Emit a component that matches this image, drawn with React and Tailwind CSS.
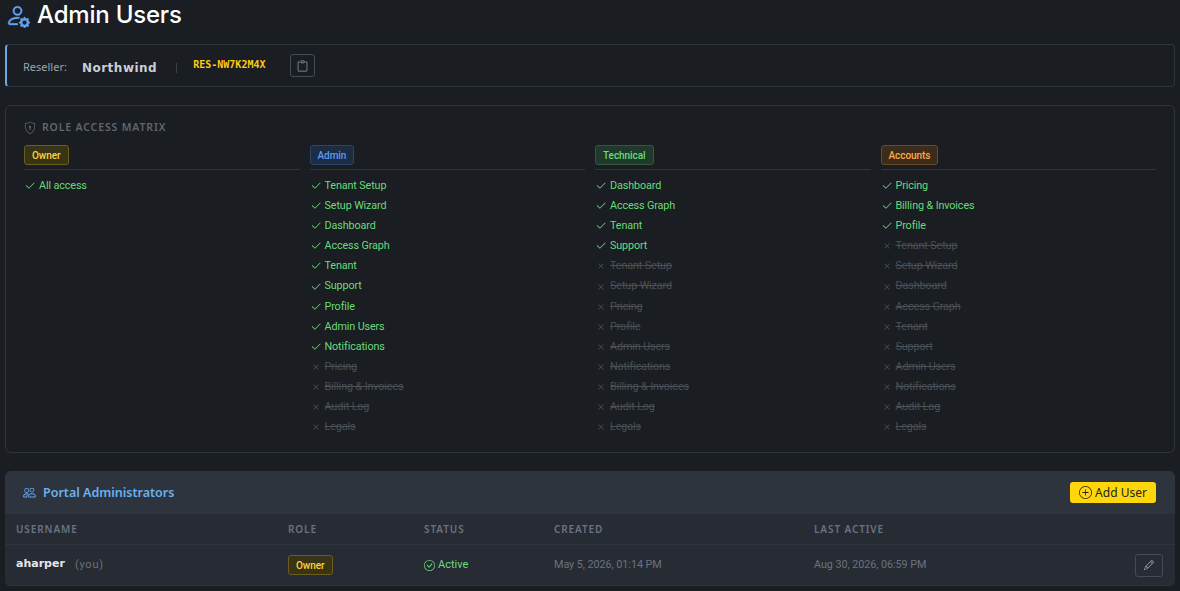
import React from 'react';
import { BsPersonGear, BsClipboard, BsShieldLock, BsPeople, BsPlusCircle, BsCheckCircle, BsPencil, BsCheck2, BsX } from 'react-icons/bs';

const roleStyles = {
  Owner: 'bg-[#3a3416] border-[#6b5d1c] text-[#ffd43b]',
  Admin: 'bg-[#1c2c44] border-[#2c4468] text-[#5a9cf5]',
  Technical: 'bg-[#1f3a2a] border-[#2f5a3e] text-[#69db7c]',
  Accounts: 'bg-[#3d2c1a] border-[#6b4a24] text-[#ffa94d]',
};

const matrix = [
  { role: 'Owner', on: ['All access'], off: [] },
  {
    role: 'Admin',
    on: ['Tenant Setup', 'Setup Wizard', 'Dashboard', 'Access Graph', 'Tenant', 'Support', 'Profile', 'Admin Users', 'Notifications'],
    off: ['Pricing', 'Billing & Invoices', 'Audit Log', 'Legals'],
  },
  {
    role: 'Technical',
    on: ['Dashboard', 'Access Graph', 'Tenant', 'Support'],
    off: ['Tenant Setup', 'Setup Wizard', 'Pricing', 'Profile', 'Admin Users', 'Notifications', 'Billing & Invoices', 'Audit Log', 'Legals'],
  },
  {
    role: 'Accounts',
    on: ['Pricing', 'Billing & Invoices', 'Profile'],
    off: ['Tenant Setup', 'Setup Wizard', 'Dashboard', 'Access Graph', 'Tenant', 'Support', 'Admin Users', 'Notifications', 'Audit Log', 'Legals'],
  },
];

const RoleBadge = ({ role }) => (
  <span className={`inline-flex items-center h-[20px] px-[7px] rounded-[3px] border font-['Roboto',sans-serif] text-[10px] tracking-[-0.05px] font-medium ${roleStyles[role]}`}>
    {role}
  </span>
);

const MatrixColumn = ({ role, on, off }) => (
  <div>
    <div className="flex items-start h-[25px] border-b border-[#30353d]">
      <RoleBadge role={role} />
    </div>
    <ul className="mt-[6px] font-['Roboto',sans-serif]">
      {on.map((item) => (
        <li key={item} className="flex items-center h-[20.1px] text-[10.8px] tracking-[-0.12px] text-[#69db7c]">
          <BsCheck2 className="w-[12px] h-[12px] mr-[3px] shrink-0" />
          <span>{item}</span>
        </li>
      ))}
      {off.map((item) => (
        <li key={item} className="flex items-center h-[20.1px] text-[10.8px] tracking-[-0.12px] text-[#495057]">
          <BsX className="w-[12px] h-[12px] mr-[3px] shrink-0" />
          <span className="line-through">{item}</span>
        </li>
      ))}
    </ul>
  </div>
);

const Th = ({ className = '', children }) => (
  <div className={`text-[10px] font-semibold tracking-[0.9px] text-[#6b7280] ${className}`}>{children}</div>
);

export default function App() {
  return (
    <div className="h-[591px] overflow-hidden bg-[#1a1d21] px-[5px] font-['Noto_Sans',sans-serif]">
      <header className="flex items-center h-[30px] gap-[7px]">
        <BsPersonGear className="w-[25px] h-[25px] text-[#60a5fa]" stroke="currentColor" strokeWidth="0.25" />
        <h1 className="font-['Inter',sans-serif] text-[24px] font-medium tracking-[-0.2px] text-white leading-none">Admin Users</h1>
      </header>

      <section className="mt-[14px] h-[43px] flex items-center border border-[#30353d] border-l-2 border-l-[#6ea8e8] rounded-[4px] pl-[16px]">
        <span className="mt-[4px] text-[11px] text-[#9ca3af]">Reseller:</span>
        <span className="mt-[4px] ml-[15px] font-['DejaVu_Sans',sans-serif] text-[12px] font-bold tracking-[0.5px] text-[#c9ced6]">Northwind</span>
        <span className="mt-[4px] ml-[19px] h-[10px] w-px bg-[#3a4049]" />
        <span className="ml-[16px] font-['DejaVu_Sans_Mono',monospace] text-[10px] font-bold text-[#facc15] -mt-[3px]">RES-NW7K2M4X</span>
        <button className="ml-[25px] w-[25px] h-[23px] flex items-center justify-center border border-[#444b55] rounded-[3px] text-[#9ca3af]">
          <BsClipboard className="w-[11px] h-[12px]" />
        </button>
      </section>

      <section className="mt-[18px] h-[348px] border border-[#30353d] rounded-[6px] px-[18px] pt-[16px]">
        <div className="flex items-center h-[12px] gap-[6px] text-[#5f6670]">
          <BsShieldLock className="w-[12px] h-[12px]" />
          <span className="text-[10.5px] font-semibold tracking-[0.85px]">ROLE ACCESS MATRIX</span>
        </div>
        <div className="grid grid-cols-4 gap-[10px] mt-[11px]">
          {matrix.map((col) => (
            <MatrixColumn key={col.role} {...col} />
          ))}
        </div>
      </section>

      <section className="mt-[18px] rounded-[6px] bg-[#272b33] border-b border-[#30353d] overflow-hidden">
        <div className="h-[43px] bg-[#2e343d] flex items-center justify-between pl-[18px] pr-[19px]">
          <div className="flex items-center gap-[7px] text-[#60a5fa]">
            <BsPeople className="w-[13px] h-[13px]" />
            <span className="mt-[1px] text-[12.5px] font-semibold text-[#6cb0f0]">Portal Administrators</span>
          </div>
          <button className="h-[21px] w-[86px] flex items-center justify-center gap-[3px] rounded-[3px] bg-[#ffd60a] text-[#212529] text-[12px]">
            <BsPlusCircle className="w-[13px] h-[13px]" />
            Add User
          </button>
        </div>
        <div className="h-[31px] flex items-center border-b border-[#30353d] pl-[11px]">
          <Th className="w-[272px]">USERNAME</Th>
          <Th className="w-[136px]">ROLE</Th>
          <Th className="w-[130px]">STATUS</Th>
          <Th className="w-[260px]">CREATED</Th>
          <Th>LAST ACTIVE</Th>
        </div>
        <div className="h-[40px] flex items-center pl-[11px] pr-[12px] font-['Roboto',sans-serif]">
          <div className="w-[272px] flex items-center">
            <span className="font-['DejaVu_Sans',sans-serif] text-[11px] font-bold text-[#e5e7eb] -mt-[2px]">aharper</span>
            <span className="ml-[10px] text-[11px] text-[#6b7280] tracking-[0.8px]">(you)</span>
          </div>
          <div className="w-[136px] flex">
            <RoleBadge role="Owner" />
          </div>
          <div className="w-[130px] flex items-center gap-[3px] text-[11px] text-[#69db7c]">
            <BsCheckCircle className="w-[11px] h-[11px]" />
            Active
          </div>
          <div className="w-[260px] text-[10.8px] tracking-[-0.05px] text-[#6b7280]">May 5, 2026, 01:14 PM</div>
          <div className="flex-1 text-[10.8px] tracking-[-0.05px] text-[#6b7280]">Aug 30, 2026, 06:59 PM</div>
          <button className="w-[28px] h-[23px] flex items-center justify-center border border-[#444b55] rounded-[3px] text-[#9ca3af]">
            <BsPencil className="w-[10px] h-[10px]" />
          </button>
        </div>
      </section>
    </div>
  );
}
